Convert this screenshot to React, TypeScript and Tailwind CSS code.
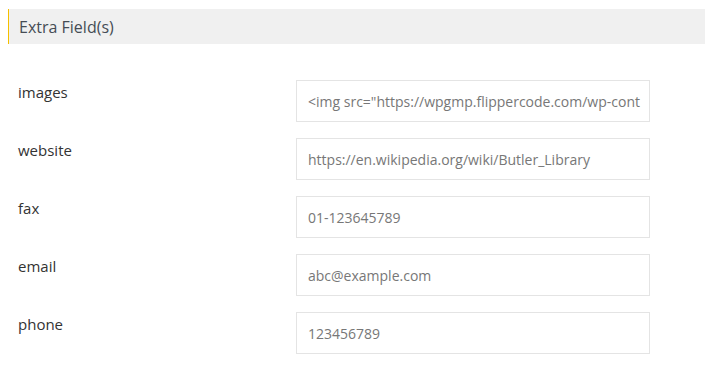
import React from "react";

const rows = [
  { label: "images", value: '<img src="https://wpgmp.flippercode.com/wp-cont' },
  { label: "website", value: "https://en.wikipedia.org/wiki/Butler_Library" },
  { label: "fax", value: "01-123645789" },
  { label: "email", value: "abc@example.com" },
  { label: "phone", value: "123456789" },
];

export default function App() {
  return (
    <div className="w-[705px] h-[372px] bg-white overflow-hidden" style={{ fontFamily: '"Open Sans", sans-serif' }}>
      <div className="mt-[9px] ml-[8px] h-[35px] bg-[#f0f0f0] border-l border-[#f5c000] flex items-center pl-[10px] text-[16px] text-[#454c55]">
        Extra Field(s)
      </div>
      <div className="mt-[36px] flex flex-col gap-[16px]">
        {rows.map((r) => (
          <div key={r.label} className="flex">
            <div className="w-[296px] pl-[18px] pt-[1px] text-[15px] leading-[22px] text-[#333]">{r.label}</div>
            <div className="w-[354px] h-[42px] border border-[#e4e4e4] bg-white flex items-center pl-[11px] pr-[4px] overflow-hidden">
              <span className="text-[14px] text-[#777] whitespace-nowrap">{r.value}</span>
            </div>
          </div>
        ))}
      </div>
    </div>
  );
}
